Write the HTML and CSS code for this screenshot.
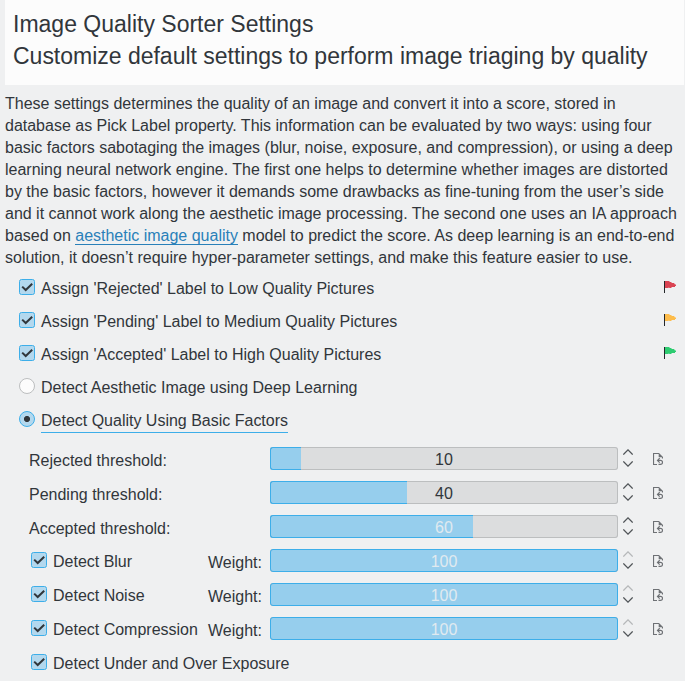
FILE: index.html
```
<!DOCTYPE html>
<html lang="en">
<head>
<meta charset="utf-8">
<title>Image Quality Sorter Settings</title>
<link rel="stylesheet" href="styles.css">
</head>
<body>
<svg class="defs" width="0" height="0" aria-hidden="true">
  <symbol id="check" viewBox="0 0 16 16"><rect x=".5" y=".5" width="15" height="15" rx="2" fill="#b3d8ee" stroke="#3daee9"/><path d="M3.2 7.6 6.7 11l6.5-6.3" fill="none" stroke="#31363b" stroke-width="2"/></symbol>
  <symbol id="flag" viewBox="0 0 12 12"><path d="M1 0h4l1 1h1l1 1h2l1 1.500H12V5h-1v1H8l-1 1H5.500L5 6.500 4 7H1z" fill="currentColor"/><path d="M.5 0v12" stroke="#232629"/></symbol>
  <symbol id="up" viewBox="0 0 10 6"><path d="M.3 5.600 5 .9l4.700 4.700" fill="none" stroke="currentColor" stroke-width="1.300"/></symbol>
  <symbol id="down" viewBox="0 0 10 6"><path d="M.3.400 5 5.100 9.700.400" fill="none" stroke="currentColor" stroke-width="1.300"/></symbol>
  <symbol id="reset" viewBox="0 0 10 12"><path d="M4 11.500H.5V.5H6M9.500 4v1.500" fill="none" stroke="#6e7175" stroke-width="1.200"/><path d="M5.700 0v4.300H10V4L6 0z" fill="#6e7175"/><path d="M6.700 5.200 4.500 7.400l2.200 2.200M4.700 7.400H7.500q2 0 2 2t-2 2H5.500" fill="none" stroke="#6e7175" stroke-width="1.200"/></symbol>
</svg>
<header class="header">
  <h1 class="title">Image Quality Sorter Settings</h1>
  <p class="title subtitle">Customize default settings to perform image triaging by quality</p>
</header>
<main>
  <p class="intro">
    <span class="line">These settings determines the quality of an image and convert it into a score, stored in</span>
    <span class="line">database as Pick Label property. This information can be evaluated by two ways: using four</span>
    <span class="line">basic factors sabotaging the images (blur, noise, exposure, and compression), or using a deep</span>
    <span class="line">learning neural network engine. The first one helps to determine whether images are distorted</span>
    <span class="line">by the basic factors, however it demands some drawbacks as fine-tuning from the user’s side</span>
    <span class="line">and it cannot work along the aesthetic image processing. The second one uses an IA approach</span>
    <span class="line">based on <a class="link">aesthetic image quality</a> model to predict the score. As deep learning is an end-to-end</span>
    <span class="line">solution, it doesn’t require hyper-parameter settings, and make this feature easier to use.</span>
  </p>
  <section class="options">
    <div class="option"><svg class="box"><use href="#check"/></svg><span class="text">Assign 'Rejected' Label to Low Quality Pictures</span><svg class="flag red"><use href="#flag"/></svg></div>
    <div class="option"><svg class="box"><use href="#check"/></svg><span class="text">Assign 'Pending' Label to Medium Quality Pictures</span><svg class="flag orange"><use href="#flag"/></svg></div>
    <div class="option"><svg class="box"><use href="#check"/></svg><span class="text">Assign 'Accepted' Label to High Quality Pictures</span><svg class="flag green"><use href="#flag"/></svg></div>
    <div class="option"><span class="radio"></span><span class="text">Detect Aesthetic Image using Deep Learning</span></div>
    <div class="option"><span class="radio on"></span><span class="text focused">Detect Quality Using Basic Factors</span></div>
  </section>
  <section class="factors">
    <div class="factor"><span class="label">Rejected threshold:</span><div class="bar"><div class="fill part" style="width:31px"></div><span class="num">10</span></div><div class="spin"><svg><use href="#up"/></svg><svg><use href="#down"/></svg></div><svg class="reset"><use href="#reset"/></svg></div>
    <div class="factor"><span class="label">Pending threshold:</span><div class="bar"><div class="fill part" style="width:137px"></div><span class="num">40</span></div><div class="spin"><svg><use href="#up"/></svg><svg><use href="#down"/></svg></div><svg class="reset"><use href="#reset"/></svg></div>
    <div class="factor"><span class="label">Accepted threshold:</span><div class="bar"><div class="fill part" style="width:203px"></div><span class="num light">60</span></div><div class="spin"><svg><use href="#up"/></svg><svg><use href="#down"/></svg></div><svg class="reset"><use href="#reset"/></svg></div>
    <div class="factor"><span class="toggle"><svg class="box"><use href="#check"/></svg><span class="text">Detect Blur</span></span><span class="weight">Weight:</span><div class="bar"><div class="fill" style="width:348px"></div><span class="num light">100</span></div><div class="spin max"><svg><use href="#up"/></svg><svg><use href="#down"/></svg></div><svg class="reset"><use href="#reset"/></svg></div>
    <div class="factor"><span class="toggle"><svg class="box"><use href="#check"/></svg><span class="text">Detect Noise</span></span><span class="weight">Weight:</span><div class="bar"><div class="fill" style="width:348px"></div><span class="num light">100</span></div><div class="spin max"><svg><use href="#up"/></svg><svg><use href="#down"/></svg></div><svg class="reset"><use href="#reset"/></svg></div>
    <div class="factor"><span class="toggle"><svg class="box"><use href="#check"/></svg><span class="text">Detect Compression</span></span><span class="weight">Weight:</span><div class="bar"><div class="fill" style="width:348px"></div><span class="num light">100</span></div><div class="spin max"><svg><use href="#up"/></svg><svg><use href="#down"/></svg></div><svg class="reset"><use href="#reset"/></svg></div>
    <div class="factor"><span class="toggle wide"><svg class="box"><use href="#check"/></svg><span class="text">Detect Under and Over Exposure</span></span></div>
  </section>
</main>
</body>
</html>
```
FILE: styles.css
```
* { box-sizing: border-box; }
body { margin: 0; height: 681px; overflow: hidden; background: #eff0f1; color: #31363b; font: 16px/22px "Liberation Sans", Arial, sans-serif; }
svg { display: block; flex: none; }
.defs { display: none; }
.header { height: 85px; margin: 0 1px 0 5px; padding: 8px 8px 0; background: #fcfcfc; }
.title { margin: 0; font-size: 23px; font-weight: 400; line-height: 32px; white-space: nowrap; }
.subtitle { letter-spacing: -0.012px; }
.intro { margin: 8px 0 0 5px; }
.line { display: block; white-space: nowrap; letter-spacing: -0.004px; }
.link { color: #2980b9; border-bottom: 1px solid #2980b9; }
.options { padding: 2px 9px 0 19px; }
.option { display: flex; height: 33px; padding-top: 7px; }
.box { width: 16px; height: 16px; margin-top: 1px; }
.text { margin-left: 6px; white-space: nowrap; letter-spacing: -0.005px; }
.flag { width: 12px; height: 12px; margin: 3px 0 0 auto; }
.red { color: #da4453; }
.orange { color: #fdbc4b; }
.green { color: #2ecc71; }
.radio { flex: none; width: 16px; height: 16px; margin-top: 1px; border: 1px solid #bcbebf; border-radius: 50%; background: #fcfcfc; }
.radio.on { border-color: #3daee9; background: radial-gradient(circle, #31363b 2.7px, #b3d8ee 3.400px); }
.focused { height: 23px; border-bottom: 1px solid #3daee9; }
.factors { padding-top: 6px; }
.factor { display: flex; height: 34px; padding-left: 29px; }
.label { width: 241px; padding-top: 8px; }
.toggle { display: flex; width: 179px; padding: 7px 0 0 2px; }
.toggle.wide { width: 300px; }
.weight { width: 62px; padding-top: 8px; }
.bar { display: grid; width: 348px; height: 23px; margin-top: 5px; border-radius: 3px; background: #dcddde; box-shadow: inset 0 0 0 1px #bcbebf; }
.fill, .num { grid-area: 1 / 1; }
.fill { border: 1px solid #3daee9; border-radius: 3px; background: #96ceed; height: 23px; }
.part { border-right: 0; border-radius: 3px 0 0 3px; }
.num { text-align: center; line-height: 26px; height: 23px; z-index: 1; }
.light { color: #e0eaf0; }
.spin { display: flex; flex-direction: column; gap: 6px; margin: 7px 0 0 5px; color: #505458; }
.spin svg { width: 10px; height: 6px; }
.max svg:first-child { color: #b5b7b9; }
.reset { width: 10px; height: 12px; margin: 11px 0 0 20px; }
```
